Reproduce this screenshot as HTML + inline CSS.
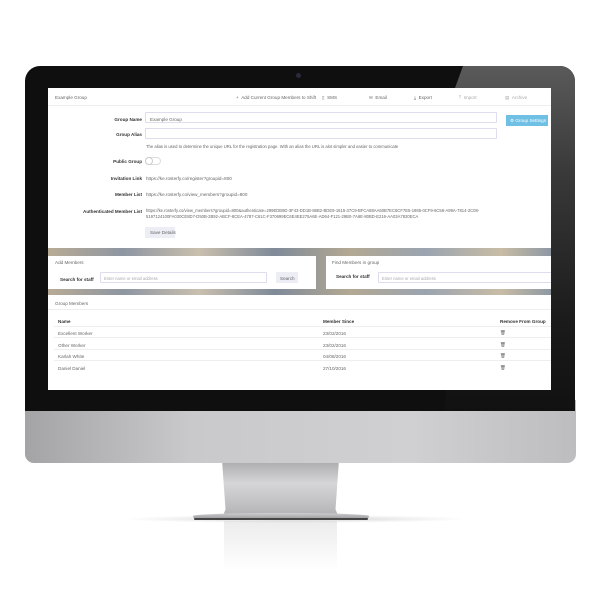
<!DOCTYPE html>
<html><head><style>
*{margin:0;padding:0;box-sizing:border-box}
body{width:600px;height:600px;background:#fff;position:relative;overflow:hidden;font-family:"Liberation Sans",sans-serif;color:#555}
.abs{position:absolute}
.t{position:absolute;font-size:4.6px;white-space:nowrap;color:#666}
.b{font-weight:bold;color:#333}
.inp{position:absolute;border:1px solid #dde;background:#fff;border-radius:1px}
</style></head><body>
<!-- stand -->
<div class="abs" style="left:120px;top:515px;width:350px;height:8px;background:radial-gradient(ellipse at center,rgba(0,0,0,.18),rgba(0,0,0,0) 70%)"></div>
<div class="abs" style="left:222px;top:460px;width:117px;height:58px;background:linear-gradient(#a9a9ad,#d6d6d8 40%,#c4c4c6 70%,#b0b0b2);clip-path:polygon(0 0,100% 0,97% 85%,100% 100%,0 100%,3% 85%)"></div>
<div class="abs" style="left:193px;top:513px;width:176px;height:6px;border-radius:50% 50% 3px 3px;background:linear-gradient(#d0d0d2,#9a9a9c)"></div>
<div class="abs" style="left:194px;top:518px;width:174px;height:2px;background:#444;border-radius:2px"></div>
<div class="abs" style="left:224px;top:521px;width:113px;height:50px;background:linear-gradient(rgba(200,200,200,.35),rgba(255,255,255,0))"></div>
<!-- chin -->
<div class="abs" style="left:25px;top:400px;width:551px;height:63px;border-radius:0 0 9px 9px;background:linear-gradient(90deg,#a4a4a6,#c9c9cb 30%,#d0d0d2 70%,#bdbdbf)"></div>
<!-- bezel -->
<div class="abs" style="left:25px;top:66px;width:550px;height:345px;border-radius:15px 15px 0 0;background:#0f0f0f;overflow:hidden">
<div class="abs" style="left:420px;top:0;width:140px;height:345px;background:linear-gradient(180deg,#5a5a5a,#3a3a3a 30%,#1a1a1a 75%,#111);clip-path:polygon(18px 0,140px 0,140px 345px,0 345px,10px 22px)"></div>
</div>
<div class="abs" style="left:296px;top:73px;width:5px;height:5px;border-radius:50%;background:#2a2a3a"></div>
<!-- screen -->
<div class="abs" style="left:48px;top:88px;width:503px;height:302px;background:#fff;overflow:hidden">
<div class="t" style="left:7px;top:7px">Example Group</div>
<div class="t" style="left:188px;top:7px">+ &nbsp;Add Current Group Members to Shift</div>
<div class="t" style="left:274px;top:7px">▯ &nbsp;SMS</div>
<div class="t" style="left:321px;top:7px">✉ &nbsp;Email</div>
<div class="t" style="left:366px;top:7px">⤓ &nbsp;Export</div>
<div class="t" style="left:411px;top:7px;color:#aaa">⤒ &nbsp;Import</div>
<div class="t" style="left:457px;top:7px;color:#aaa">▤ &nbsp;Archive</div>
<div class="abs" style="left:0;top:17px;width:503px;height:1px;background:#eee"></div>
<div class="t b" style="left:55px;top:29px;width:39px;text-align:right">Group Name</div>
<div class="inp" style="left:97px;top:24px;width:352px;height:11px"></div>
<div class="t" style="left:102px;top:29px">Example Group</div>
<div class="abs" style="left:458px;top:27px;width:42px;height:11px;background:#6fc0e4"></div>
<div class="t" style="left:462px;top:30px;color:#fff">⚙ Group Settings</div>
<div class="t b" style="left:55px;top:44px;width:39px;text-align:right">Group Alias</div>
<div class="inp" style="left:97px;top:40px;width:352px;height:11px"></div>
<div class="t" style="left:98px;top:56px;font-size:4.2px">The alias is used to determine the unique URL for the registration page. With an alias the URL is alot simpler and easier to communicate</div>
<div class="t b" style="left:38px;top:71px;width:56px;text-align:right">Public Group</div>
<div class="abs" style="left:97px;top:69px;width:16px;height:8px;border:1px solid #ddd;border-radius:5px"></div>
<div class="abs" style="left:97px;top:69px;width:8px;height:8px;border:1px solid #ccc;border-radius:50%;background:#fff"></div>
<div class="t b" style="left:38px;top:88px;width:56px;text-align:right">Invitation Link</div>
<div class="t" style="left:98px;top:88px">https://ke.rosterfy.co/register?groupid=800</div>
<div class="t b" style="left:38px;top:104px;width:56px;text-align:right">Member List</div>
<div class="t" style="left:98px;top:104px">https://ke.rosterfy.co/view_members?groupid=800</div>
<div class="t b" style="left:18px;top:121px;width:76px;text-align:right">Authenticated Member List</div>
<div class="t" style="left:98px;top:120px;font-size:4.2px">https://ke.rosterfy.co/view_members?groupid=800&amp;authenticate=299EDB9D-3F43-DD1B-86B2-BDE9-1615-37C9-BFCA88AA60B7EC6CF7E5-1985-0CF9-6C58-A99A-7814-2C08-</div>
<div class="t" style="left:98px;top:126px;font-size:4.2px">5197124100FA030CE8D7-D50B-2B92-ABCF-8CEA-4787-C61C-F370699EC6E4EE275A6E-AD64-F121-29B0-7A6E-80BD-E216-AA03A7820ECA</div>
<div class="abs" style="left:97px;top:139px;width:30px;height:11px;background:#ecedf5"></div>
<div class="t" style="left:102px;top:142px">Save Details</div>
<div class="abs" style="left:0;top:160px;width:503px;height:47px;background:linear-gradient(90deg,#b8ab95,#8e96a2 15%,#c9bfae 30%,#7f8a98 45%,#b3a893 60%,#9aa4b0 75%,#c8bca5 90%,#8e98a3)"></div>
<div class="abs" style="left:0;top:168px;width:268px;height:33px;background:#fff"></div>
<div class="abs" style="left:278px;top:168px;width:225px;height:33px;background:#fff"></div>
<div class="t" style="left:7px;top:172px">Add Members</div>
<div class="t b" style="left:12px;top:189px">Search for staff</div>
<div class="inp" style="left:52px;top:184px;width:167px;height:11px"></div>
<div class="t" style="left:56px;top:188px;color:#aaa;font-size:4.2px">Enter name or email address</div>
<div class="abs" style="left:228px;top:184px;width:22px;height:11px;background:#ecedf5"></div>
<div class="t" style="left:232px;top:188px">Search</div>
<div class="t" style="left:284px;top:172px">Find Members in group</div>
<div class="t b" style="left:288px;top:186px">Search for staff</div>
<div class="inp" style="left:330px;top:184px;width:175px;height:11px"></div>
<div class="t" style="left:334px;top:188px;color:#aaa;font-size:4.2px">Enter name or email address</div>
<div class="t" style="left:7px;top:213px">Group Members</div>
<div class="abs" style="left:0;top:221px;width:503px;height:1px;background:#eee"></div>
<div class="t b" style="left:10px;top:231px">Name</div>
<div class="t b" style="left:275px;top:231px">Member Since</div>
<div class="t b" style="left:452px;top:231px">Remove From Group</div>
<div class="abs" style="left:6px;top:238px;width:497px;height:1px;background:#eee"></div>
<div class="t" style="left:10px;top:243px">Excellent Worker</div><div class="t" style="left:275px;top:243px">23/02/2016</div><div class="t" style="left:452px;top:242px">🗑</div>
<div class="abs" style="left:6px;top:249px;width:497px;height:1px;background:#eee"></div>
<div class="t" style="left:10px;top:255px">Other Worker</div><div class="t" style="left:275px;top:255px">23/02/2016</div><div class="t" style="left:452px;top:254px">🗑</div>
<div class="abs" style="left:6px;top:261px;width:497px;height:1px;background:#eee"></div>
<div class="t" style="left:10px;top:266px">Karlah White</div><div class="t" style="left:275px;top:266px">04/08/2016</div><div class="t" style="left:452px;top:265px">🗑</div>
<div class="abs" style="left:6px;top:272px;width:497px;height:1px;background:#eee"></div>
<div class="t" style="left:10px;top:278px">Daniel Daniel</div><div class="t" style="left:275px;top:278px">27/10/2016</div><div class="t" style="left:452px;top:277px">🗑</div>
</div>
</body></html>
